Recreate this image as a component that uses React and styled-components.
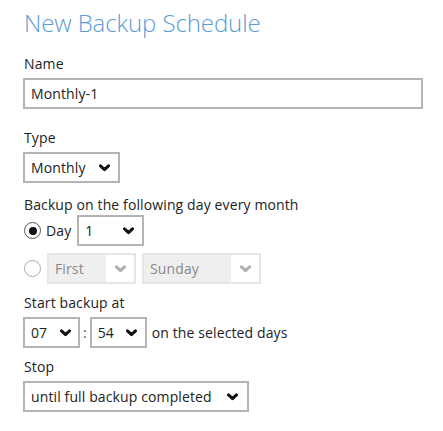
import React from "react";
import styled, { createGlobalStyle } from "styled-components";

const Global = createGlobalStyle`
  html, body { margin: 0; padding: 0; background: #fff; }
  body { font-family: "Open Sans", "Noto Sans", sans-serif; color: #222; }
`;

const Page = styled.div`
  padding: 5px 0 0 23px;
  width: 443px;
  box-sizing: border-box;
`;

const Title = styled.h1`
  margin: 0;
  font-size: 24px;
  font-weight: 300;
  color: #5b9bd8;
  line-height: 36px;
  padding-left: 1px;
  letter-spacing: -0.1px;
`;

const Field = styled.div`
  display: flex;
  flex-direction: column;
  align-items: flex-start;
  margin-top: ${(p) => p.$mt || 0}px;
`;

const Label = styled.div`
  font-size: 14px;
  line-height: 18px;
  letter-spacing: 0.12px;
  padding-left: 1px;
  margin-bottom: ${(p) => p.$mb ?? 5}px;
`;

const TextInput = styled.div`
  box-sizing: border-box;
  width: 400px;
  height: 31px;
  border: 2px solid #b4b4b4;
  font-size: 14px;
  letter-spacing: 0.12px;
  display: flex;
  align-items: center;
  padding-left: 6px;
`;

const Select = styled.div`
  box-sizing: border-box;
  width: ${(p) => p.$w}px;
  height: 31px;
  border: 2px solid ${(p) => (p.$disabled ? "#e6e6e6" : "#b4b4b4")};
  background: ${(p) => (p.$disabled ? "#efefef" : "#fff")};
  color: ${(p) => (p.$disabled ? "#8a8a8a" : "#222")};
  font-size: 14px;
  letter-spacing: 0.12px;
  display: flex;
  align-items: center;
  padding-left: 6px;
  white-space: nowrap;
`;

const SelectText = styled.span`
  flex: 1;
`;

const ArrowBox = styled.span`
  width: ${(p) => p.$w || 24}px;
  align-self: stretch;
  display: flex;
  align-items: center;
  justify-content: center;
  background: ${(p) => (p.$disabled ? "#fff" : "transparent")};
`;

const Row = styled.div`
  display: flex;
  align-items: center;
  gap: ${(p) => p.$gap || 6}px;
  margin-top: ${(p) => p.$mt || 0}px;
`;

const Radio = styled.span`
  box-sizing: border-box;
  width: 17px;
  height: 17px;
  border-radius: 50%;
  border: 1.5px solid ${(p) => (p.$checked ? "#555" : "#aaa")};
  display: flex;
  align-items: center;
  justify-content: center;
  background: #fff;
  margin-left: 1px;
  &::after {
    content: "";
    width: 8px;
    height: 8px;
    border-radius: 50%;
    background: ${(p) => (p.$checked ? "#111" : "transparent")};
  }
`;

const RadioLabel = styled.span`
  font-size: 14px;
  letter-spacing: 0.12px;
  margin-right: 1px;
`;

const Plain = styled.span`
  font-size: 14px;
  letter-spacing: 0.12px;
  margin-left: ${(p) => p.$ml || 0}px;
`;

const Colon = styled.span`
  font-size: 14px;
  color: #555;
`;

const Chevron = ({ disabled }) => (
  <svg width="11" height="8" viewBox="0 0 11 8">
    <path
      d="M1.5 1.8 L5.5 5.6 L9.5 1.8"
      fill="none"
      stroke={disabled ? "#b0b0b0" : "#111"}
      strokeWidth="3"
      strokeLinecap="round"
      strokeLinejoin="round"
    />
  </svg>
);

const Dropdown = ({ w, value, arrowW, disabled }) => (
  <Select $w={w} $disabled={disabled}>
    <SelectText>{value}</SelectText>
    <ArrowBox $w={arrowW} $disabled={disabled}>
      <Chevron disabled={disabled} />
    </ArrowBox>
  </Select>
);

export default function App() {
  return (
    <Page>
      <Global />
      <Title>New Backup Schedule</Title>
      <Field $mt={14}>
        <Label>Name</Label>
        <TextInput>Monthly-1</TextInput>
      </Field>
      <Field $mt={20}>
        <Label>Type</Label>
        <Dropdown w={97} value="Monthly" arrowW={28} />
      </Field>
      <Field $mt={13}>
        <Label $mb={1}>Backup on the following day every month</Label>
        <Row $gap={5}>
          <Radio $checked />
          <RadioLabel>Day</RadioLabel>
          <Dropdown w={67} value="1" arrowW={28} />
        </Row>
        <Row $gap={6} $mt={7}>
          <Radio />
          <Dropdown w={89} value="First" arrowW={28} disabled />
          <Dropdown w={119} value="Sunday" arrowW={28} disabled />
        </Row>
      </Field>
      <Field $mt={10}>
        <Label>Start backup at</Label>
        <Row $gap={3}>
          <Dropdown w={57} value="07" arrowW={26} />
          <Colon>:</Colon>
          <Dropdown w={57} value="54" arrowW={26} />
          <Plain $ml={2}>on the selected days</Plain>
        </Row>
      </Field>
      <Field $mt={10}>
        <Label>Stop</Label>
        <Dropdown w={226} value="until full backup completed" arrowW={30} />
      </Field>
    </Page>
  );
}
